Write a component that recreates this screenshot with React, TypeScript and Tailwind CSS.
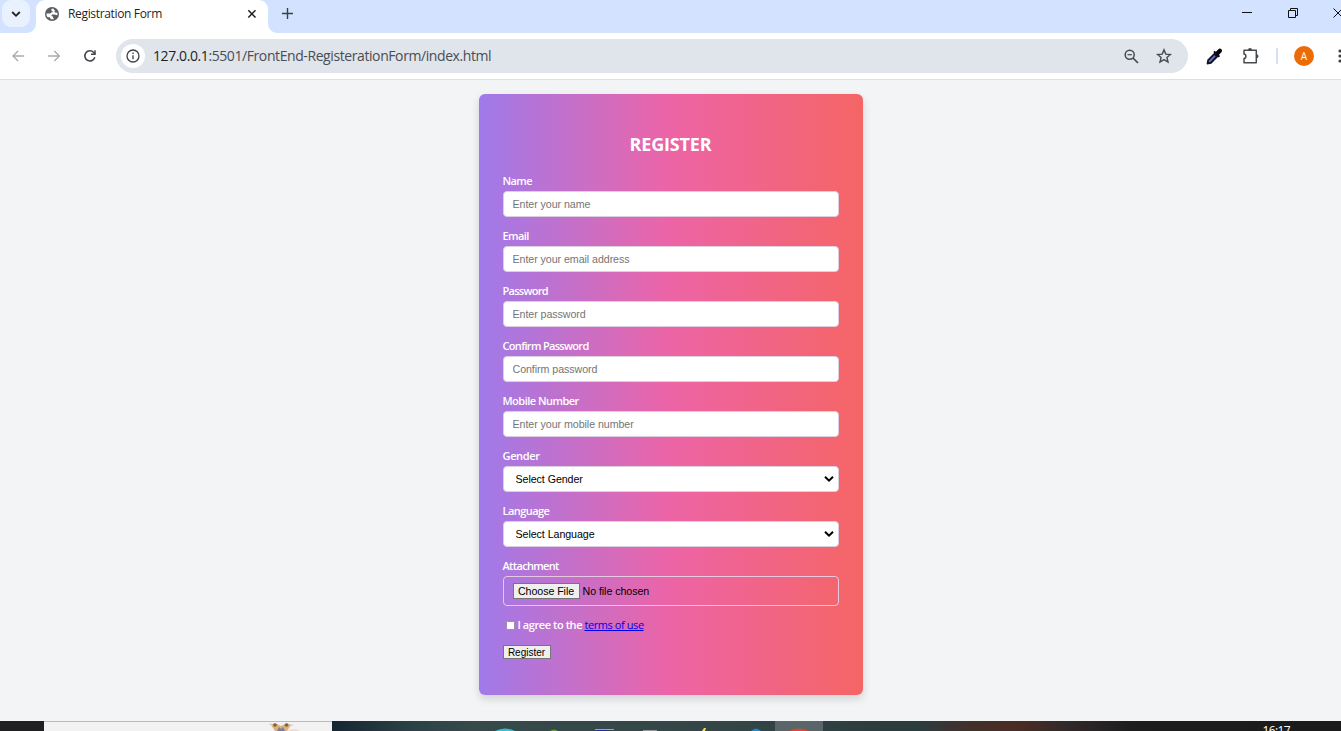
import type { ReactNode } from "react";

const UI = "font-['Open_Sans','Noto_Sans',sans-serif]";
const ARIAL = "font-['Liberation_Sans',Arial,sans-serif]";

function TabStrip() {
  return (
    <div className="flex h-[33px] shrink-0 items-start bg-[#d3e2fe]">
      <div className="flex h-[33px] w-[36px] shrink-0 items-start bg-[#d3e2fe] pl-[2px]">
        <div className="flex h-[27px] w-[28px] items-center justify-center rounded-[9px] bg-[#e9f1ff]">
          <svg width="10" height="8" viewBox="0 0 10 8" fill="none" stroke="#1f1f1f" strokeWidth="1.8">
            <path d="M1.2 2l3.8 3.8L8.8 2" />
          </svg>
        </div>
      </div>
      <div className="relative flex h-[33px] w-[232px] shrink-0 items-center rounded-t-[9px] bg-white pb-[6px] pl-[9px]">
        <svg className="absolute -left-[9px] bottom-0" width="9" height="9" viewBox="0 0 9 9">
          <path d="M9 0v9H0a9 9 0 0 0 9-9z" fill="#fff" />
        </svg>
        <svg className="absolute -right-[9px] bottom-0" width="9" height="9" viewBox="0 0 9 9">
          <path d="M0 0v9h9a9 9 0 0 1-9-9z" fill="#fff" />
        </svg>
        <svg width="14" height="14" viewBox="0 0 14 14">
          <circle cx="7" cy="7" r="7" fill="#5a5e63" />
          <path
            d="M8.200 1.600C6.800 1.500 6 2.400 6.300 3.300c.3.900 1.300.5 1.400 1.300.1.700-.8.800-1.400.9-.5.100-.3.900-1 1-.9.100-2.400-.2-3.900-.1C1.400 8 1.900 9.300 2.700 10.300c.9.100 1.600-.3 2.300.1.600.4.100 1.200.8 1.800 1.300.3 2.600.1 3.300-.3-.9-.6-1.600-1.500-.8-2.300-.9-.3-2-.6-1.800-1.400.3-.9 1.700-.7 2.800-.6.900.1 1.400.8 3 .7.300-1 .2-2-.1-2.800-.9.400-1.900.4-2.500-.2-.6-.7.100-1.300.600-1.700-.9-.2-1.600-.9-2.100-2z"
            fill="#fff"
          />
        </svg>
        <span className="ml-[9px] w-[179px] text-[12px] tracking-[-0.34px] whitespace-nowrap text-[#1f1f1f]">Registration Form</span>
        <svg width="10" height="10" viewBox="0 0 10 10" stroke="#1f1f1f" strokeWidth="1.5">
          <path d="M1.300 1.300l7.200 7.200M8.500 1.300L1.300 8.500" />
        </svg>
      </div>
      <svg className="mt-[8px] ml-[14px]" width="11" height="11" viewBox="0 0 11 11" stroke="#3c4043" strokeWidth="1.4">
        <path d="M5.500 0v11M0 5.500h11" />
      </svg>
      <div className="ml-auto flex h-[26px] items-center">
        <svg width="10" height="10" viewBox="0 0 10 10" stroke="#111" strokeWidth="1">
          <path d="M0 4.500h10" />
        </svg>
        <svg className="ml-[36px]" width="10" height="10" viewBox="0 0 10 10" fill="none" stroke="#111">
          <path d="M.5 2.500h7v7h-7zM2.500 2.500v-2h7v7h-2" />
        </svg>
        <svg className="ml-[35px]" width="8" height="10" viewBox="0 0 8 10" stroke="#111" strokeWidth="1">
          <path d="M.5.5l9 9M9.500.5l-9 9" />
        </svg>
      </div>
    </div>
  );
}

function Toolbar() {
  return (
    <div className="flex h-[47px] shrink-0 items-center border-b border-[#dddfe2] bg-white pl-[12px]">
      <svg width="13" height="12" viewBox="0 0 13 12" fill="none" stroke="#a9abae" strokeWidth="1.400">
        <path d="M12.500 6H1.200M6.200.8L1 6l5.200 5.200" />
      </svg>
      <svg className="ml-[23px]" width="13" height="12" viewBox="0 0 13 12" fill="none" stroke="#a9abae" strokeWidth="1.400">
        <path d="M0 6h11.500M6.500.8L11.700 6l-5.200 5.200" />
      </svg>
      <svg className="ml-[23px]" width="14" height="14" viewBox="0 0 14 14" fill="none" stroke="#414448" strokeWidth="1.600">
        <path d="M12.100 8.300A5.200 5.200 0 1 1 11 3.400L12.300 4.900" />
        <path d="M12.300 1v4.200H8.200" strokeWidth="1.500" />
      </svg>
      <div className="ml-[19px] flex h-[34px] w-[1072px] shrink-0 items-center rounded-full bg-[#e0e4eb] pl-[5px]">
        <div className="flex size-[24px] items-center justify-center rounded-full bg-white">
          <svg width="14" height="14" viewBox="0 0 14 14" fill="none" stroke="#3c4043" strokeWidth="1.300">
            <circle cx="7" cy="7" r="6" />
            <path d="M7 6.300v4M7 3.600v1.500" />
          </svg>
        </div>
        <span className="ml-[8px] pb-px text-[14px] tracking-[-0.41px] whitespace-nowrap text-[#4a4d52]">
          <span className="text-[#1f1f1f]">127.0.0.1</span>:5501/FrontEnd-RegisterationForm/index.html
        </span>
        <svg className="ml-auto" width="15" height="15" viewBox="0 0 15 15" fill="none" stroke="#474a4e" strokeWidth="1.500">
          <circle cx="5.700" cy="5.700" r="4.500" />
          <path d="M9 9l5 5" strokeWidth="1.700" />
          <path d="M3.500 5.700h4.400" strokeWidth="1.200" />
        </svg>
        <svg className="mr-[16px] ml-[17px]" width="16" height="16" viewBox="0 0 16 16" fill="none" stroke="#474a4e" strokeWidth="1.400">
          <path d="M8 1.900l1.800 4.200 4.600.4-3.500 3 1.100 4.500L8 11.600 4 14l1.100-4.500-3.500-3 4.600-.4z" />
        </svg>
      </div>
      <svg className="ml-[18px] shrink-0" width="17" height="17" viewBox="0 0 17 17">
        <path d="M8.500 4.500l4 4L5.300 15.700l-4.100.8-.6-.8.700-3.900z" fill="#11132d" />
        <path d="M8.400 7.300l1.200 1.300-5.200 5.300-1.700.4.400-1.900z" fill="#6670b4" />
        <path d="M7.300 4l1.200-1.200 1.400 1 2.200-2.400c1.200-1.200 2.500-1 3.300-.2.900.9.900 2-.2 3.200L13 6.800l1 1.400-1.300 1.300z" fill="#080812" />
      </svg>
      <svg className="ml-[19px] shrink-0" width="18" height="18" viewBox="0 0 18 18">
        <path
          d="M2 7V3.200h12.300v12.500H2v-4.100c2.500-.3 2.500-4.300 0-4.600z"
          fill="none"
          stroke="#474a4e"
          strokeWidth="1.500"
          strokeLinejoin="round"
        />
        <path d="M6 3a2 2 0 0 1 4 0zM14.500 7.200a2 2 0 0 1 0 4z" fill="#474a4e" />
      </svg>
      <div className="ml-[16px] h-[16px] w-[2px] shrink-0 rounded-full bg-[#d5e0f3]" />
      <div className="ml-[16px] flex size-[20px] shrink-0 items-center justify-center rounded-full bg-[#ea6c06] text-[10px] text-white">A</div>
      <svg className="ml-[24px] shrink-0" width="3" height="14" viewBox="0 0 3 14" fill="#3c4043">
        <circle cx="2" cy="2" r="1.600" />
        <circle cx="2" cy="7" r="1.600" />
        <circle cx="2" cy="12" r="1.600" />
      </svg>
    </div>
  );
}

function Field({ label, tracking, children }: { label: string; tracking: string; children: ReactNode }) {
  return (
    <label className="mb-[10px] flex flex-col">
      <span className={`${tracking} h-[19px] text-[11px] leading-[18px] font-semibold text-white`}>{label}</span>
      {children}
    </label>
  );
}

function TextInput({ placeholder, type = "text" }: { placeholder: string; type?: string }) {
  return (
    <input
      type={type}
      placeholder={placeholder}
      className={`${ARIAL} h-[26px] w-full rounded-[4px] border border-[#dccfe0] bg-white px-[9px] text-[10.67px] tracking-[-0.06px] placeholder:text-[#757575]`}
    />
  );
}

function SelectBox({ text }: { text: string }) {
  return (
    <span className="relative block">
      <select className={`${ARIAL} block h-[26px] w-full appearance-none rounded-[4px] border border-[#dccfe0] bg-white px-[12px] text-[10.67px] tracking-[-0.06px] text-black`}>
        <option>{text}</option>
      </select>
      <svg className="pointer-events-none absolute top-[9px] right-[5px]" width="10" height="8" viewBox="0 0 10 8" fill="none" stroke="#000" strokeWidth="2">
        <path d="M1 1.700l4 4 4-4" />
      </svg>
    </span>
  );
}

function RegisterCard() {
  return (
    <form className="mt-[14px] flex h-[601px] w-[384px] flex-col rounded-[6px] bg-linear-[to_right_in_srgb,#9f7aea,#ed64a6,#f56565] px-[24px] pt-[36px] shadow-[0_4px_9px_rgba(0,0,0,0.14)]">
      <h1 className="mb-[14px] h-[28px] text-center text-[18px] leading-[28px] font-bold tracking-[-0.15px] text-white">REGISTER</h1>
      <Field label="Name" tracking="tracking-[-0.6px]"><TextInput placeholder="Enter your name" /></Field>
      <Field label="Email" tracking="tracking-[-0.6px]"><TextInput placeholder="Enter your email address" /></Field>
      <Field label="Password" tracking="tracking-[-0.72px]"><TextInput placeholder="Enter password" type="password" /></Field>
      <Field label="Confirm Password" tracking="tracking-[-0.68px]"><TextInput placeholder="Confirm password" type="password" /></Field>
      <Field label="Mobile Number" tracking="tracking-[-0.52px]"><TextInput placeholder="Enter your mobile number" /></Field>
      <Field label="Gender" tracking="tracking-[-0.35px]"><SelectBox text="Select Gender" /></Field>
      <Field label="Language" tracking="tracking-[-0.55px]"><SelectBox text="Select Language" /></Field>
      <Field label="Attachment" tracking="tracking-[-0.68px]">
        <span className={`${ARIAL} flex h-[30px] items-center rounded-[4px] border border-[#e6c8e3] px-[9px] text-[10.67px] tracking-[-0.06px] text-black`}>
          <span className="flex h-[16px] w-[67px] items-center justify-center border border-[#767676] bg-[#efefef] whitespace-nowrap">Choose File</span>
          <span className="ml-[3px]">No file chosen</span>
        </span>
      </Field>
      <div className="flex h-[18px] items-center pl-[3px] text-[11px] text-white">
        <span className="mt-px mr-[3px] size-[9px] rounded-[1px] border border-[#a58bb0] bg-white" />
        <span className="font-semibold tracking-[-0.43px] whitespace-pre">I agree to the </span>
        <a className="tracking-[-0.42px] text-[#0000ee] underline">terms of use</a>
      </div>
      <button type="button" className={`${ARIAL} mt-[11px] flex h-[14px] w-[48px] items-center justify-center border border-[#767676] bg-[#efefef] pt-px text-[10px] leading-none text-black`}>
        Register
      </button>
    </form>
  );
}

function Taskbar() {
  return (
    <div className="flex h-[10px] shrink-0 overflow-hidden bg-[#1d1c1d]">
      <div className="w-[44px] shrink-0 bg-[#1f1e20]" />
      <div className="w-[288px] shrink-0 border-t border-[#b9babc] bg-[#f2f2f2] pl-[225px]">
        <svg width="34" height="9" viewBox="0 0 34 9">
          <path d="M0 2l8 1M24 3l-8 1" stroke="#dfc9b2" />
          <path d="M18 9q4-3 12-1v1z" fill="#efd9cc" />
          <path d="M2 3q4-3 8 0l2 1 2-1q4-3 8 0l-4 6H6z" fill="#d9b27e" />
          <circle cx="6" cy="3" r="1.800" fill="#80603f" />
          <circle cx="17.500" cy="3" r="1.800" fill="#80603f" />
          <path d="M8 9l2-4 2 2 2-2 2 4z" fill="#7b7d98" />
        </svg>
      </div>
      <div className="relative h-[10px] grow bg-[linear-gradient(90deg,#152632_0%,#2b4245_8%,#364a4b_14%,#344547_40%,#2b3b3e_56%,#2b3c40_58%,#42302b_63%,#4b2c24_68%,#30292a_73%,#1e1d1e_79%,#1c1b1c_100%)]">
        <svg className="absolute top-0 left-0" width="600" height="10" viewBox="332 721 600 10">
          <rect x="775" y="721" width="48" height="10" fill="#596567" />
          <path d="M495 731q10-5 20 0z" fill="#36bfd0" />
          <path d="M550 731q4-3 8 0z" fill="#6c9a46" />
          <path d="M595 729h19v1h-19z" fill="#9da6b8" />
          <path d="M596 730h9l4 1h-12z" fill="#2626aa" />
          <path d="M643 730h14v1h-14z" fill="#929998" />
          <path d="M702 731l2-3h2l-1 3z" fill="#efdf6a" />
          <path d="M751 731q5-5 10 0z" fill="#168bcb" />
          <path d="M789 731q10-5 20 0z" fill="#e34332" />
        </svg>
        <span className="absolute top-[2px] right-[51px] text-[12px] leading-[16px] tracking-[-0.6px] text-white">16:17</span>
      </div>
    </div>
  );
}

export default function App() {
  return (
    <div className={`${UI} flex h-[731px] w-[1341px] flex-col overflow-hidden bg-[#f2f4f6]`}>
      <TabStrip />
      <Toolbar />
      <main className="flex min-h-0 grow justify-center">
        <RegisterCard />
      </main>
      <Taskbar />
    </div>
  );
}
